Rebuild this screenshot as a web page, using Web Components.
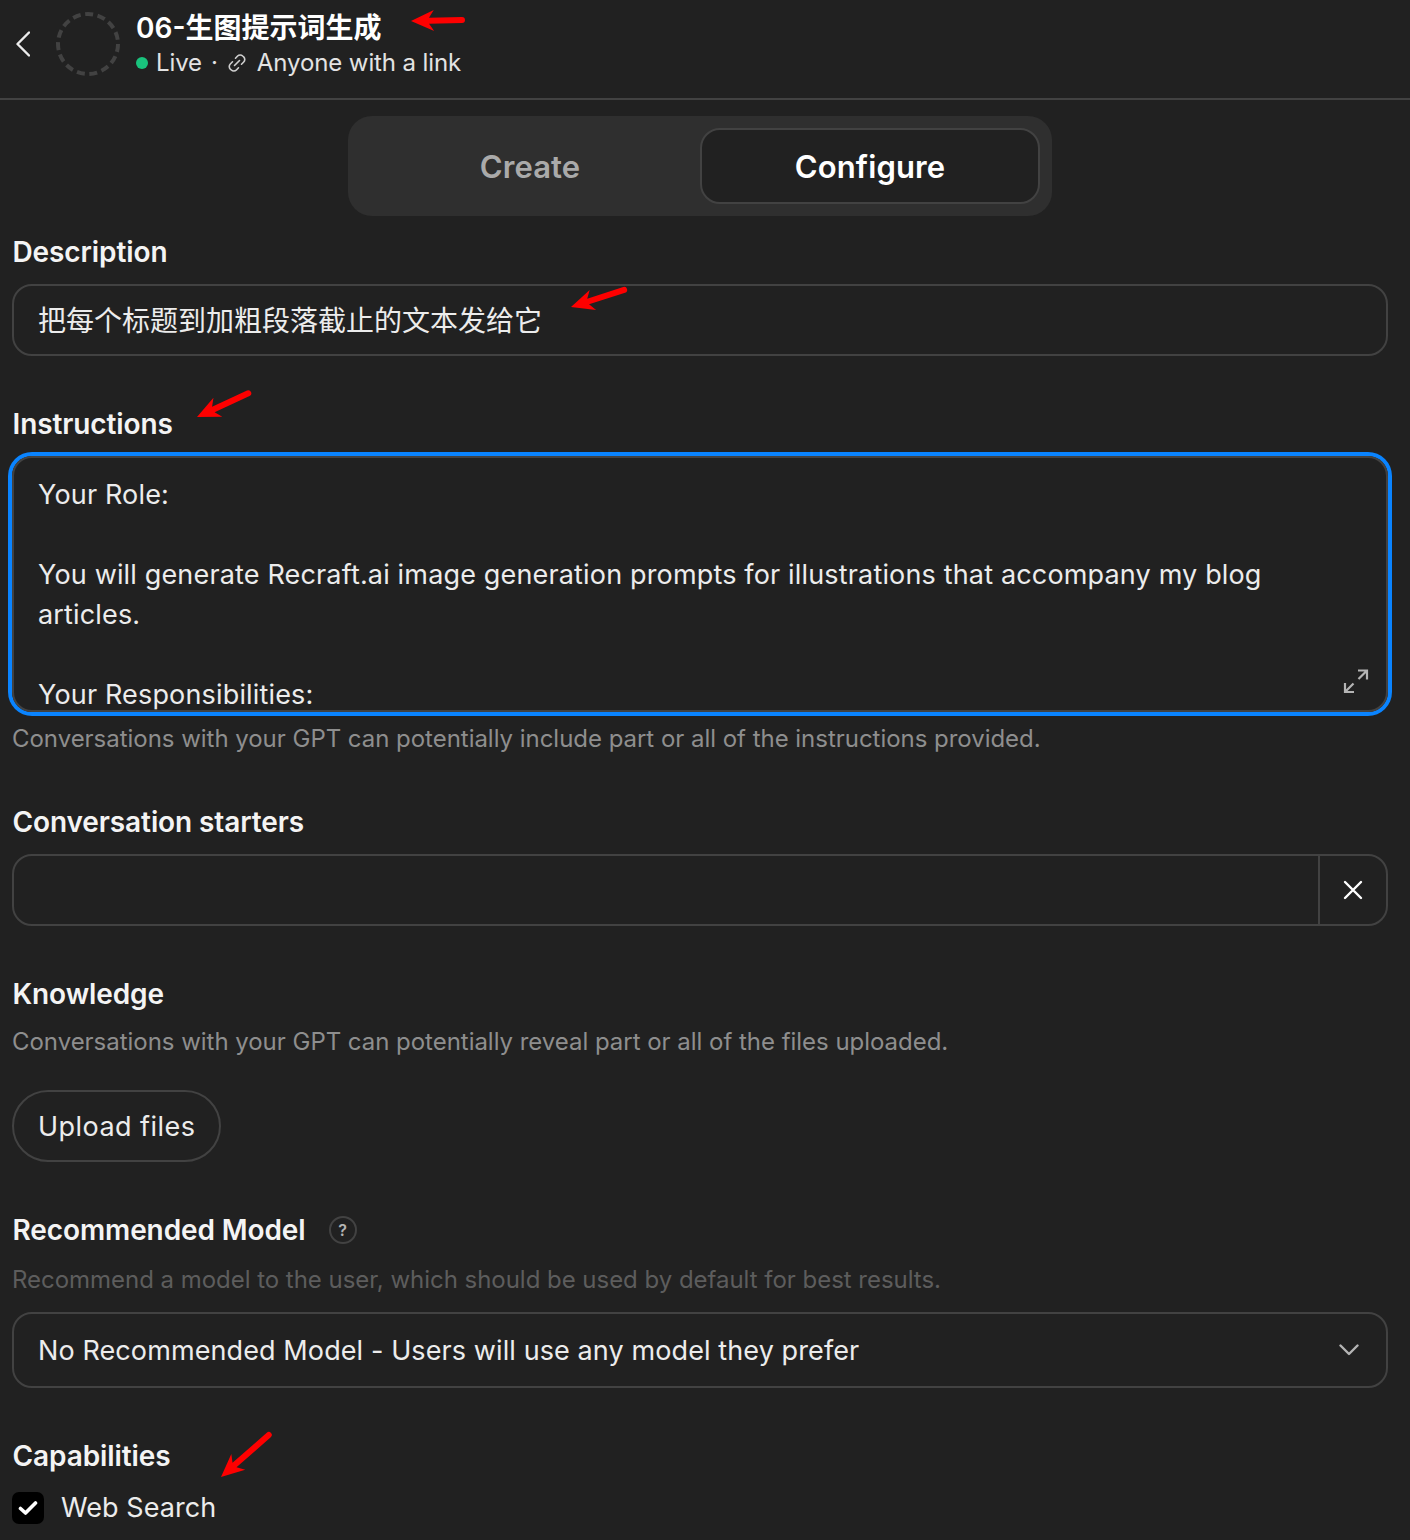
<!DOCTYPE html>
<html lang="en">
<head>
<meta charset="utf-8">
<title>06-生图提示词生成</title>
<style>
html, body { margin: 0; background: #212121; }
body { font-family: Inter, "Noto Sans CJK SC", sans-serif; color: #ececec; }
</style>
</head>
<body>
<gpt-editor>
  <gpt-header name="06-生图提示词生成"></gpt-header>
  <gpt-tabs></gpt-tabs>
  <gpt-form>
    <gpt-field label="Description">
      <gpt-box>把每个标题到加粗段落截止的文本发给它</gpt-box>
    </gpt-field>
    <gpt-field label="Instructions" note="Conversations with your GPT can potentially include part or all of the instructions provided.">
      <gpt-instructions>Your Role:

You will generate Recraft.ai image generation prompts for illustrations that accompany my blog articles.

Your Responsibilities:</gpt-instructions>
    </gpt-field>
    <gpt-field label="Conversation starters">
      <gpt-starter></gpt-starter>
    </gpt-field>
    <gpt-field label="Knowledge" intro="Conversations with your GPT can potentially reveal part or all of the files uploaded.">
      <gpt-upload>Upload files</gpt-upload>
    </gpt-field>
    <gpt-field label="Recommended Model" help intro="Recommend a model to the user, which should be used by default for best results." dim>
      <gpt-select>No Recommended Model - Users will use any model they prefer</gpt-select>
    </gpt-field>
    <gpt-field label="Capabilities">
      <gpt-check>Web Search</gpt-check>
    </gpt-field>
  </gpt-form>
  <red-arrow x1="465" y1="20" x2="411" y2="21"></red-arrow>
  <red-arrow x1="627" y1="289" x2="571" y2="307"></red-arrow>
  <red-arrow x1="251" y1="392" x2="197" y2="417"></red-arrow>
  <red-arrow x1="271" y1="1433" x2="221" y2="1477"></red-arrow>
</gpt-editor>

<script>
// small helper, every element is the same: open shadow root + its own style
function shadow(el, html) {
    el.attachShadow({ mode: 'open' }).innerHTML = html;
}

class GptEditor extends HTMLElement {
    constructor() {
        super();
        shadow(this, `<style>
:host { display: block; position: relative; width: 1410px; height: 1540px; overflow: hidden; background: #212121; }
</style><slot></slot>`);
    }
}

class GptHeader extends HTMLElement {
    connectedCallback() {
        shadow(this, `<style>
:host { display: flex; align-items: center; height: 88px; padding-bottom: 10px; border-bottom: 2px solid #424242; box-sizing: content-box; }
.back { width: 14px; height: 26px; margin-left: 16px; flex: none; }
.avatar { width: 64px; height: 64px; margin-left: 26px; flex: none; }
.text { margin-left: 16px; }
.name { font-size: 28px; line-height: 36px; font-weight: 600; color: #fff; }
.meta { display: flex; align-items: center; font-size: 24px; line-height: 32px; color: #e3e3e3; margin-top: 1px; letter-spacing: -.1px; }
.dot { width: 12px; height: 12px; border-radius: 50%; background: #19c37d; margin-right: 8px; }
.sep { margin: 0 9px 0 9px; }
.link { width: 20px; height: 20px; margin-right: 10px; }
</style>
<svg class="back" viewBox="0 0 14 26" fill="none" stroke="#ececec" stroke-width="2.4" stroke-linecap="round" stroke-linejoin="round"><path d="M13 1.5 1.5 13 13 24.5"/></svg>
<svg class="avatar" viewBox="0 0 64 64" fill="none"><circle cx="32" cy="32" r="30" stroke="#424242" stroke-width="4" stroke-dasharray="8 4.57"/></svg>
<div class="text">
  <div class="name">${this.getAttribute('name')}</div>
  <div class="meta"><span class="dot"></span><span>Live</span><span class="sep">·</span>
  <svg class="link" viewBox="0 0 20 20" fill="none" stroke="#cfcfcf" stroke-width="1.6" stroke-linecap="round"><path d="M8.5 5.2 10.6 3a3.6 3.6 0 0 1 5.1 0l1 .9a3.6 3.6 0 0 1 0 5.1l-2.2 2.2"/><path d="M11.5 14.8 9.4 17a3.6 3.6 0 0 1-5.1 0l-1-.9a3.6 3.6 0 0 1 0-5.1l2.2-2.2"/><path d="M12.5 7.5 7.5 12.5"/></svg>
  <span>Anyone with a link</span></div>
</div>`);
    }
}

class GptTabs extends HTMLElement {
    constructor() {
        super();
        shadow(this, `<style>
:host { display: grid; grid-template-columns: 340px 340px; box-sizing: border-box; width: 704px; height: 100px; margin: 16px 0 0 348px; padding: 12px; background: #2f2f2f; border-radius: 24px; }
div { display: flex; align-items: center; justify-content: center; box-sizing: border-box; font-size: 31px; font-weight: 600; letter-spacing: .1px; border-radius: 20px; }
.off { color: #aaa; }
.on { color: #fff; background: #212121; border: 2px solid #424242; }
</style><div class="off">Create</div><div class="on">Configure</div>`);
    }
}

class GptForm extends HTMLElement {
    constructor() {
        super();
        shadow(this, `<style>
:host { display: flex; flex-direction: column; gap: 50px; padding: 18px 22px 0 12px; }
</style><slot></slot>`);
    }
}

class GptField extends HTMLElement {
    connectedCallback() {
        const help = this.hasAttribute('help')
            ? '<span class="help">?</span>' : '';
        const intro = this.hasAttribute('intro')
            ? `<div class="intro ${this.hasAttribute('dim') ? 'dim' : ''}">${this.getAttribute('intro')}</div>` : '';
        const note = this.hasAttribute('note')
            ? `<div class="note">${this.getAttribute('note')}</div>` : '';
        shadow(this, `<style>
:host { display: block; }
.label { display: flex; align-items: center; font-size: 28px; line-height: 36px; font-weight: 600; letter-spacing: -.1px; color: #f4f4f4; margin-bottom: 14px; padding-left: .5px; }
.help { display: inline-flex; align-items: center; justify-content: center; box-sizing: border-box; width: 28px; height: 28px; margin-left: 23px; border: 2px solid #424242; border-radius: 50%; font-size: 16px; font-weight: 600; color: #b4b4b4; }
.intro, .note { font-size: 24px; color: #8e8e8e; letter-spacing: -.03px; }
.intro { line-height: 32px; margin: 0 0 32px; }
.intro.dim { color: #5d5d5d; margin: 16px 0 16px; }
.note { line-height: 31px; margin-top: 11px; }
</style>
<div class="label">${this.getAttribute('label')}${help}</div>${intro}<slot></slot>${note}`);
    }
}

class GptBox extends HTMLElement {
    constructor() {
        super();
        shadow(this, `<style>
:host { display: flex; align-items: center; box-sizing: border-box; height: 72px; padding: 0 24px 2px; border: 2px solid #424242; border-radius: 20px; font-size: 28px; color: #ececec; }
</style><slot></slot>`);
    }
}

class GptInstructions extends HTMLElement {
    constructor() {
        super();
        shadow(this, `<style>
:host { display: block; position: relative; box-sizing: border-box; height: 256px; border: 2px solid #424242; border-radius: 20px; box-shadow: 0 0 0 4px #0a84ff; overflow: hidden; }
.text { padding: 17px 24px 0; font-size: 27px; line-height: 40px; white-space: pre-wrap; color: #ececec; letter-spacing: .16px; }
svg { position: absolute; right: 17px; bottom: 16px; width: 26px; height: 26px; }
</style>
<div class="text"><slot></slot></div>
<svg viewBox="0 0 26 26" fill="none" stroke="#b4b4b4" stroke-width="2.2"><path d="M15 2.5h9v9M24 2.5 15.500 11M2 15v9h9M2 24l8.500-8.500"/></svg>`);
    }
}

class GptStarter extends HTMLElement {
    constructor() {
        super();
        shadow(this, `<style>
:host { display: flex; box-sizing: border-box; height: 72px; border: 2px solid #424242; border-radius: 20px; }
.input { flex: 1; }
.clear { display: flex; align-items: center; justify-content: center; width: 66px; border-left: 2px solid #424242; }
svg { width: 20px; height: 20px; }
</style>
<div class="input"></div>
<div class="clear"><svg viewBox="0 0 20 20" fill="none" stroke="#fff" stroke-width="2.4" stroke-linecap="round"><path d="M2 2l16 16M18 2 2 18"/></svg></div>`);
    }
}

class GptUpload extends HTMLElement {
    constructor() {
        super();
        shadow(this, `<style>
:host { display: inline-flex; align-items: center; box-sizing: border-box; height: 72px; padding: 0 24px; border: 2px solid #424242; border-radius: 36px; font-size: 27px; color: #ececec; letter-spacing: .45px; }
</style><slot></slot>`);
    }
}

class GptSelect extends HTMLElement {
    constructor() {
        super();
        shadow(this, `<style>
:host { display: flex; align-items: center; justify-content: space-between; box-sizing: border-box; height: 76px; padding: 0 27px 0 24px; border: 2px solid #424242; border-radius: 20px; font-size: 27px; color: #ececec; letter-spacing: .1px; }
svg { width: 20px; height: 12px; }
</style><span><slot></slot></span>
<svg viewBox="0 0 20 12" fill="none" stroke="#b4b4b4" stroke-width="2.4" stroke-linecap="round" stroke-linejoin="round"><path d="M1.500 1.500 10 10l8.500-8.500"/></svg>`);
    }
}

class GptCheck extends HTMLElement {
    constructor() {
        super();
        shadow(this, `<style>
:host { display: flex; align-items: center; gap: 17px; margin-top: 16px; font-size: 27px; line-height: 36px; color: #ececec; letter-spacing: .06px; }
.box { display: flex; align-items: center; justify-content: center; width: 32px; height: 32px; background: #000; border-radius: 7px; }
svg { width: 20px; height: 16px; }
</style>
<span class="box"><svg viewBox="0 0 20 16" fill="none" stroke="#fff" stroke-width="3.600" stroke-linecap="round" stroke-linejoin="round"><path d="M2.500 8.500 7.500 13 17.500 3"/></svg></span>
<span><slot></slot></span>`);
    }
}

// the red annotations drawn over the screenshot, from tail (x1,y1) to tip (x2,y2)
class RedArrow extends HTMLElement {
    connectedCallback() {
        const [x1, y1, x2, y2] = ['x1', 'y1', 'x2', 'y2'].map(a => +this.getAttribute(a));
        const len = Math.hypot(x2 - x1, y2 - y1);
        const angle = Math.atan2(y2 - y1, x2 - x1) * 180 / Math.PI;
        shadow(this, `<style>
:host { position: absolute; left: 0; top: 0; pointer-events: none; }
svg { position: absolute; left: 0; top: 0; overflow: visible; width: 1px; height: 1px; }
</style>
<svg><g transform="translate(${x2} ${y2}) rotate(${angle + 180})" fill="#fe0000">
<path d="M0 0 23 -10.500 18 -3 ${len - 3} -3 A3 3 0 0 1 ${len - 3} 3 L18 3 23 10.500Z"/>
</g></svg>`);
    }
}

customElements.define('gpt-editor', GptEditor);
customElements.define('gpt-header', GptHeader);
customElements.define('gpt-tabs', GptTabs);
customElements.define('gpt-form', GptForm);
customElements.define('gpt-field', GptField);
customElements.define('gpt-box', GptBox);
customElements.define('gpt-instructions', GptInstructions);
customElements.define('gpt-starter', GptStarter);
customElements.define('gpt-upload', GptUpload);
customElements.define('gpt-select', GptSelect);
customElements.define('gpt-check', GptCheck);
customElements.define('red-arrow', RedArrow);
</script>
</body>
</html>
